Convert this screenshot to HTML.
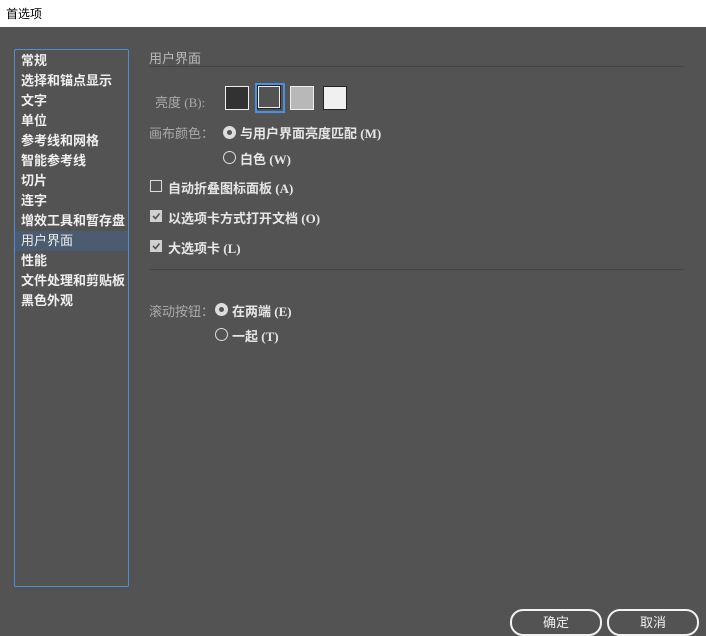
<!DOCTYPE html>
<html><head><meta charset="utf-8"><style>
body{margin:0;width:706px;height:636px;background:#535353;position:relative;overflow:hidden;font-family:"Liberation Serif","Noto Sans CJK SC",sans-serif;font-size:13px;color:#e6e6e6}
.a{position:absolute;white-space:nowrap}
#title{left:0;top:0;width:706px;height:27px;background:#fff;color:#000;font-size:12px;font-family:"Liberation Sans","Noto Sans CJK SC",sans-serif}
#list{left:14px;top:49px;width:113px;height:536px;border:1px solid #4c8fd6;border-radius:2px}
.it{position:absolute;left:6px;height:20px;line-height:20px;font-weight:bold;color:#eee}
.sel{left:0;width:113px;padding-left:6px;box-sizing:border-box;background:#4b5c70;font-weight:normal}
.sw{position:absolute;top:86px;width:22px;height:22px;border:1px solid #1a1a1a}
.cb{position:absolute;width:10px;height:10px;border:1px solid #ddd}
.cbc{background:#d0d0d0;border-color:#d0d0d0}
.cbc svg{position:absolute;left:0;top:0}
.rd{position:absolute;width:11px;height:11px;border:1px solid #ddd;border-radius:50%}
.rdon{background:#ddd}
.rdon::after{content:"";position:absolute;left:3px;top:3px;width:5px;height:5px;border-radius:50%;background:#555}
.lbl{color:#aaa}
.btn{position:absolute;top:609px;height:23px;border:2px solid #f2f2f2;border-radius:13px;text-align:center;line-height:23px;color:#eee}
</style></head><body>
<div id="title" class="a"><span style="position:absolute;left:6px;top:5px">首选项</span></div>
<div id="list" class="a">
<div class="it" style="top:1px">常规</div>
<div class="it" style="top:21px">选择和锚点显示</div>
<div class="it" style="top:41px">文字</div>
<div class="it" style="top:61px">单位</div>
<div class="it" style="top:81px">参考线和网格</div>
<div class="it" style="top:101px">智能参考线</div>
<div class="it" style="top:121px">切片</div>
<div class="it" style="top:141px">连字</div>
<div class="it" style="top:161px">增效工具和暂存盘</div>
<div class="it sel" style="top:181px">用户界面</div>
<div class="it" style="top:201px">性能</div>
<div class="it" style="top:221px">文件处理和剪贴板</div>
<div class="it" style="top:241px">黑色外观</div>
</div>
<div class="a lbl" style="left:149px;top:48px;color:#bbb">用户界面</div>
<div class="a" style="left:149px;top:66px;width:535px;height:1px;background:#444"></div>
<div class="a lbl" style="left:155px;top:92px">亮度 (B):</div>
<div class="sw" style="left:225px;background:#323232;border-color:#eee"></div>
<div class="sw" style="left:255px;top:83px;width:26px;height:26px;border:2px solid #4a90e2;background:#535353"><div style="box-sizing:border-box;width:22px;height:22px;margin:1px;border:1px solid #eee;outline:1px solid #222"></div></div>
<div class="sw" style="left:290px;background:#b8b8b8;border-color:#eee"></div>
<div class="sw" style="left:323px;background:#f0f0f0;border-color:#222"></div>
<div class="a lbl" style="left:149px;top:123px">画布颜色：</div>
<div class="rd rdon" style="left:223px;top:126px"></div>
<div class="a" style="left:240px;top:123px;font-weight:bold">与用户界面亮度匹配 (M)</div>
<div class="rd" style="left:223px;top:151px"></div>
<div class="a" style="left:240px;top:149px;font-weight:bold">白色 (W)</div>
<div class="cb" style="left:150px;top:180px"></div>
<div class="a" style="left:168px;top:178px;font-weight:bold">自动折叠图标面板 (A)</div>
<div class="cb cbc" style="left:150px;top:210px"><svg width="10" height="10"><path d="M2 5 L4.5 7.5 L8.5 2.5" stroke="#555" stroke-width="1.6" fill="none"/></svg></div>
<div class="a" style="left:168px;top:208px;font-weight:bold">以选项卡方式打开文档 (O)</div>
<div class="cb cbc" style="left:150px;top:240px"><svg width="10" height="10"><path d="M2 5 L4.5 7.5 L8.5 2.5" stroke="#555" stroke-width="1.6" fill="none"/></svg></div>
<div class="a" style="left:168px;top:238px;font-weight:bold">大选项卡 (L)</div>
<div class="a" style="left:149px;top:269px;width:535px;height:1px;background:#444"></div>
<div class="a lbl" style="left:149px;top:301px">滚动按钮：</div>
<div class="rd rdon" style="left:215px;top:303px"></div>
<div class="a" style="left:232px;top:301px;font-weight:bold">在两端 (E)</div>
<div class="rd" style="left:215px;top:328px"></div>
<div class="a" style="left:232px;top:326px;font-weight:bold">一起 (T)</div>
<div class="btn" style="left:510px;width:88px">确定</div>
<div class="btn" style="left:607px;width:88px">取消</div>
</body></html>
